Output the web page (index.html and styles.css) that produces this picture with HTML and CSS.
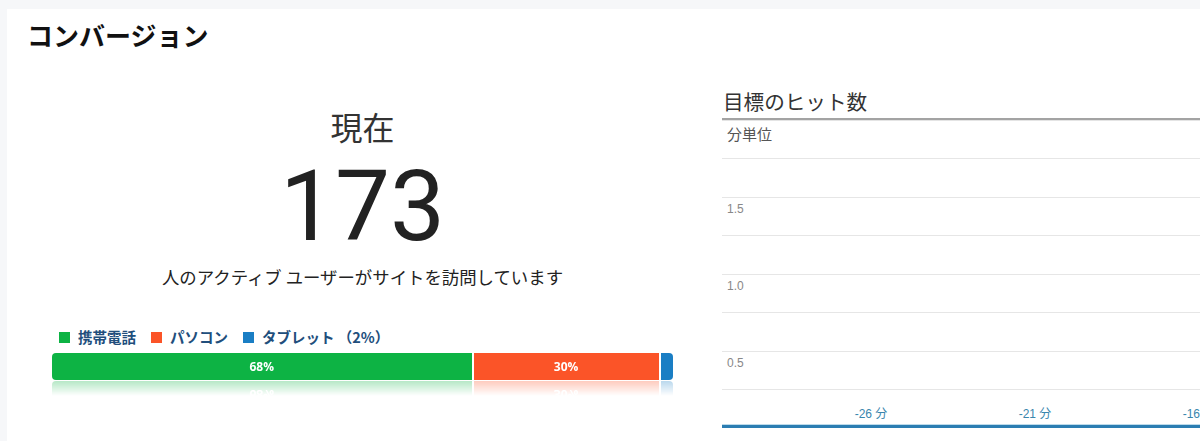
FILE: index.html
```html
<!DOCTYPE html>
<html lang="ja">
<head>
<meta charset="utf-8">
<link rel="stylesheet" href="styles.css">
</head>
<body>
<div class="card">
  <h2 class="title">コンバージョン</h2>
  <div class="row">
    <div class="left">
      <div class="now">現在</div>
      <div class="count">173</div>
      <div class="sub">人のアクティブ ユーザーがサイトを訪問しています</div>
      <div class="legend">
        <span class="sq green"></span><span class="lg">携帯電話</span>
        <span class="sq orange"></span><span class="lg">パソコン</span>
        <span class="sq blue"></span><span class="lg">タブレット （2%）</span>
      </div>
      <div class="bar">
        <div class="seg green" style="width:68%">68%</div>
        <div class="seg orange" style="width:30%">30%</div>
        <div class="seg blue" style="width:2%"></div>
      </div>
    </div>
    <div class="right">
      <div class="ctitle">目標のヒット数</div>
      <div class="unit">分単位</div>
      <div class="grid">
        <div class="gl"></div>
        <div class="gl"><span class="yl">1.5</span></div>
        <div class="gl"></div>
        <div class="gl"><span class="yl">1.0</span></div>
        <div class="gl"></div>
        <div class="gl"><span class="yl">0.5</span></div>
        <div class="gl last"></div>
      </div>
      <div class="xaxis">
        <span class="xl">-26 分</span>
        <span class="xl">-21 分</span>
        <span class="xl">-16 分</span>
      </div>
      <div class="baseline"></div>
    </div>
  </div>
</div>
</body>
</html>
```
FILE: styles.css
```css
html, body {
  margin: 0;
  padding: 0;
}
body {
  background: #f6f7f9;
  overflow: hidden;
  width: 1200px;
  height: 441px;
  font-family: "Noto Sans CJK JP", "Noto Sans", sans-serif;
}
.card {
  margin: 9px 0 0 7px;
  width: 1260px;
  height: 440px;
  background: #fff;
  padding-top: 10px;
  box-sizing: border-box;
}
.title {
  margin: 0 0 0 20px;
  font-size: 26px;
  line-height: 32px;
  font-weight: 700;
  color: #111;
}
.row {
  display: flex;
  margin-left: 45px;
  gap: 49px;
}
.left {
  width: 621px;
  display: flex;
  flex-direction: column;
  align-items: center;
}
.now {
  margin-top: 55px;
  font-size: 32px;
  line-height: 40px;
  color: #333;
}
.count {
  margin-top: 12px;
  font-family: Roboto, "Liberation Sans", sans-serif;
  font-size: 98px;
  line-height: 98px;
  color: #222;
}
.sub {
  margin-top: 9px;
  font-size: 17.4px;
  line-height: 24px;
  color: #222;
}
.legend {
  align-self: flex-start;
  margin: 38px 0 0 7px;
  display: flex;
  align-items: center;
  font-size: 14.5px;
  line-height: 20px;
  font-weight: 700;
  color: #214e7c;
}
.sq {
  width: 11px;
  height: 11px;
  margin-right: 8px;
}
.lg {
  margin-right: 15px;
}
.green { background: #0db344; }
.orange { background: #fb5428; }
.blue { background: #1a7ec4; }
.bar {
  align-self: stretch;
  margin-top: 6px;
  height: 27px;
  display: flex;
  gap: 2px;
  border-radius: 4px;
  overflow: hidden;
  -webkit-box-reflect: below 1px linear-gradient(transparent 45%, rgba(0,0,0,0.3));
}
.seg {
  height: 100%;
  color: #fff;
  font-family: "Open Sans", "Liberation Sans", sans-serif;
  font-weight: 700;
  font-size: 12px;
  line-height: 27px;
  text-align: center;
}
.right {
  width: 540px;
  display: flex;
  flex-direction: column;
}
.ctitle {
  margin-top: 37px;
  padding-left: 1px;
  font-size: 20.6px;
  line-height: 26px;
  color: #333;
  padding-bottom: 4px;
  border-bottom: 2px solid #a3a3a3;
  box-shadow: 0 1px 0 #e4e4e4;
}
.unit {
  height: 38px;
  box-sizing: border-box;
  padding: 4px 0 0 5px;
  font-size: 15px;
  line-height: 20px;
  color: #555;
}
.gl {
  height: 38.5px;
  box-sizing: border-box;
  border-top: 1px solid #e6e6e6;
  padding: 4px 0 0 5px;
}
.gl.last {
  height: 18px;
}
.yl {
  display: block;
  font-family: "Liberation Sans", sans-serif;
  font-size: 12px;
  line-height: 14px;
  color: #888;
}
.xaxis {
  display: flex;
  padding-left: 109px;
  gap: 84px;
}
.xl {
  width: 80px;
  text-align: center;
  font-family: "Liberation Sans", "Noto Sans CJK JP", sans-serif;
  font-size: 12px;
  line-height: 14px;
  color: #3a86ad;
}
.baseline {
  margin-top: 4px;
  height: 3px;
  background: #2b7db2;
  box-shadow: 0 -1px 0 #bcdbeb;
}
```
